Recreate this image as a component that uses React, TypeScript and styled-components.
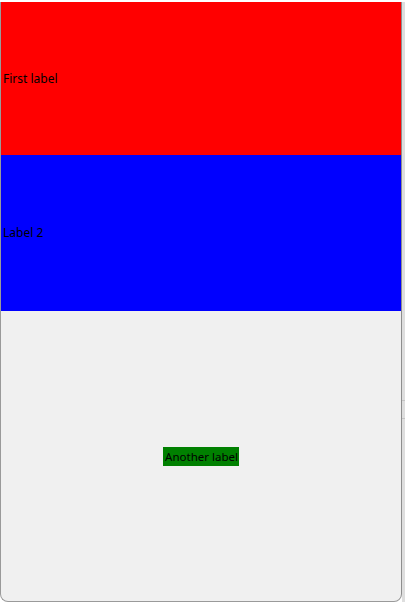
import React from "react";
import styled, { createGlobalStyle } from "styled-components";

const GlobalStyle = createGlobalStyle`
  html, body {
    margin: 0;
    padding: 0;
    background: #ffffff;
  }
`;

const App: React.FC = () => {
  return (
    <>
      <GlobalStyle />
      <Desktop>
        <Window>
          <Band color="#ff0000" height={153}>
            <Label>First label</Label>
          </Band>
          <Band color="#0000ff" height={156}>
            <Label>Label 2</Label>
          </Band>
          <Center>
            <GreenLabel>Another label</GreenLabel>
          </Center>
        </Window>
        <Edge>
          <EdgeLine />
          <EdgeLine />
        </Edge>
      </Desktop>
    </>
  );
};

export default App;

const Desktop = styled.div`
  display: flex;
  width: 405px;
  height: 602px;
  padding-top: 2px;
  box-sizing: border-box;
  background: #ffffff;
  font-family: "Noto Sans", "Open Sans", sans-serif;
  font-size: 12px;
  overflow: hidden;
`;

const Window = styled.div`
  display: flex;
  flex-direction: column;
  width: 402px;
  height: 600px;
  box-sizing: border-box;
  border-left: 1px solid #9a9a9a;
  border-right: 1px solid #8e8e8e;
  border-bottom: 1px solid #9a9a9a;
  border-radius: 0 0 8px 8px;
  background: #f0f0f0;
  overflow: hidden;
`;

const Band = styled.div<{ color: string; height: number }>`
  display: flex;
  align-items: center;
  height: ${(p) => p.height}px;
  flex-shrink: 0;
  background: ${(p) => p.color};
  padding-left: 2px;
`;

const Label = styled.span`
  color: #000000;
  font-size: 12px;
  line-height: 16px;
`;

const Center = styled.div`
  flex: 1;
  display: flex;
  align-items: center;
  justify-content: center;
`;

const GreenLabel = styled.span`
  background: #008000;
  color: #000000;
  font-size: 11.5px;
  padding: 1px 1px 1px 2px;
  line-height: 17px;
`;

const Edge = styled.div`
  width: 3px;
  height: 600px;
  background: #dedede;
  display: flex;
  flex-direction: column;
  gap: 17px;
  padding-top: 398px;
  box-sizing: border-box;
`;

const EdgeLine = styled.div`
  height: 1px;
  background: #c4c4c4;
`;
